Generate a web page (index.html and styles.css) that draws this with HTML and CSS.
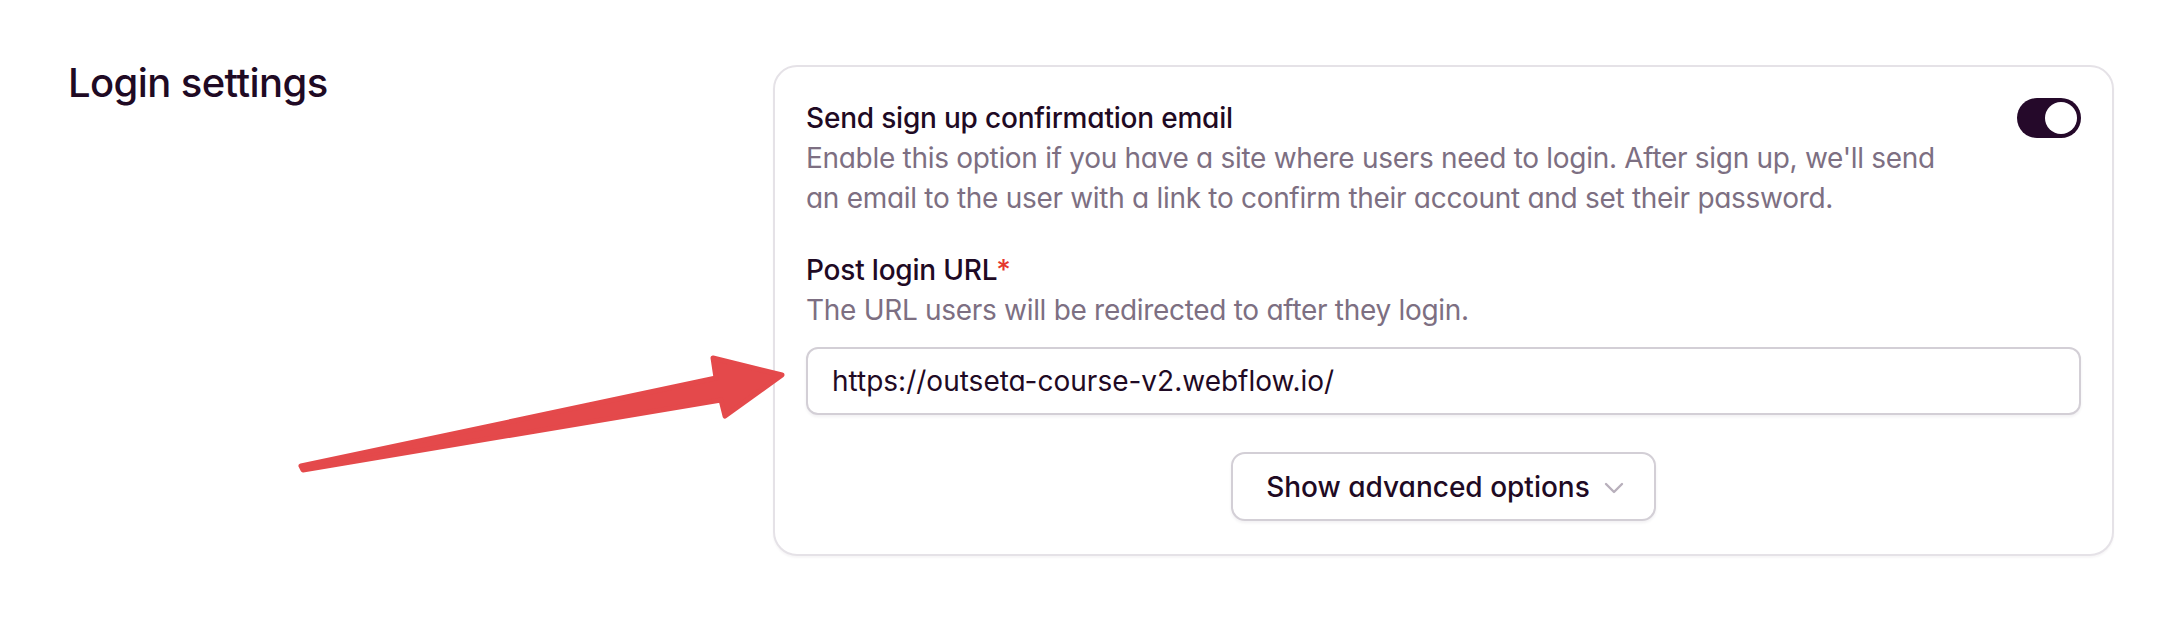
FILE: index.html
```html
<!DOCTYPE html>
<html lang="en">
<head>
<meta charset="utf-8">
<title>Login settings</title>
<link rel="stylesheet" href="styles.css">
</head>
<body>
<div class="page">
  <h2 class="section-title">Login settings</h2>
  <div class="card">
    <div class="setting-row">
      <div class="setting-text">
        <div class="setting-label">Send sign up confirmation email</div>
        <p class="setting-help">Enable this option if you have a site where users need to login. After sign up, we'll send an email to the user with a link to confirm their account and set their password.</p>
      </div>
      <span class="toggle is-on"><span class="toggle-knob"></span></span>
    </div>
    <div class="field">
      <label class="setting-label" for="post-login-url">Post login URL<span class="required">*</span></label>
      <p class="setting-help">The URL users will be redirected to after they login.</p>
      <input class="text-input" id="post-login-url" type="text" value="https://outseta-course-v2.webflow.io/">
    </div>
    <div class="actions">
      <button class="advanced-btn" type="button">Show advanced options
        <svg class="chevron" width="20" height="12" viewBox="0 0 20 12"><path d="M2 2 L10 10 L18 2" fill="none" stroke="#b8b0bc" stroke-width="2.4" stroke-linecap="round" stroke-linejoin="round"/></svg>
      </button>
    </div>
  </div>
  <svg class="annotation-arrow" width="2176" height="618" viewBox="0 0 2176 618">
    <polygon points="301,466 716,378 713,358 782,375 725,416 721,400 303,470" fill="#e4494b" stroke="#e4494b" stroke-width="5" stroke-linejoin="round"/>
  </svg>
</div>
</body>
</html>
```

FILE: styles.css
```css
html, body {
  margin: 0;
  padding: 0;
  background: #ffffff;
}

body {
  font-family: "Inter", "Noto Sans", "Liberation Sans", sans-serif;
  font-feature-settings: "cv11" 1;
  color: #1f0a24;
}

.page {
  position: relative;
  display: flex;
  align-items: flex-start;
  padding: 65px 62px 0 68px;
  width: 2176px;
  height: 618px;
  box-sizing: border-box;
}

.section-title {
  flex: 0 0 705px;
  margin: 0;
  font-size: 40px;
  line-height: 36px;
  font-weight: 500;
  color: #1f0a24;
  letter-spacing: -0.6px;
}

.card {
  width: 1341px;
  box-sizing: border-box;
  border: 2px solid #e5e2e7;
  border-radius: 24px;
  padding: 31px 31px 33px;
  background: #fff;
  box-shadow: 0 2px 2px rgba(40, 20, 50, 0.04);
}

.setting-row {
  display: flex;
  align-items: flex-start;
  justify-content: space-between;
  gap: 32px;
}

.setting-text {
  flex: 1;
}

.setting-label {
  display: block;
  font-size: 28px;
  line-height: 40px;
  font-weight: 500;
  letter-spacing: -0.2px;
  color: #1f0a24;
}

.required {
  color: #e5372d;
}

.setting-help {
  margin: 0;
  max-width: 1160px;
  font-size: 28px;
  line-height: 40px;
  font-weight: 400;
  letter-spacing: -0.3px;
  color: #7d6f82;
}

.toggle {
  flex: 0 0 auto;
  display: flex;
  align-items: center;
  justify-content: flex-end;
  width: 64px;
  height: 40px;
  box-sizing: border-box;
  padding: 4px;
  border-radius: 20px;
  background: #25092a;
}

.toggle-knob {
  width: 32px;
  height: 32px;
  border-radius: 50%;
  background: #ffffff;
}

.field {
  margin-top: 32px;
  display: flex;
  flex-direction: column;
}

.text-input {
  margin-top: 17px;
  height: 68px;
  box-sizing: border-box;
  border: 2px solid #d3cfd6;
  border-radius: 12px;
  padding: 12px 24px;
  font-family: inherit;
  font-feature-settings: "cv11" 1;
  font-size: 28px;
  line-height: 40px;
  color: #1f0a24;
  background: #fff;
  box-shadow: 0 2px 3px rgba(40, 20, 50, 0.06);
  outline: none;
}

.actions {
  display: flex;
  justify-content: center;
  margin-top: 37px;
}

.advanced-btn {
  display: flex;
  align-items: center;
  gap: 14px;
  height: 69px;
  box-sizing: border-box;
  border: 2px solid #d3cfd6;
  border-radius: 14px;
  padding: 12px 30px 12px 33px;
  background: #fff;
  font-family: inherit;
  font-feature-settings: "cv11" 1;
  font-size: 28px;
  line-height: 40px;
  font-weight: 500;
  color: #1f0a24;
  box-shadow: 0 2px 3px rgba(40, 20, 50, 0.06);
}

.chevron {
  display: block;
  margin-top: 2px;
}

.annotation-arrow {
  position: absolute;
  left: 0;
  top: 0;
  pointer-events: none;
}
```
